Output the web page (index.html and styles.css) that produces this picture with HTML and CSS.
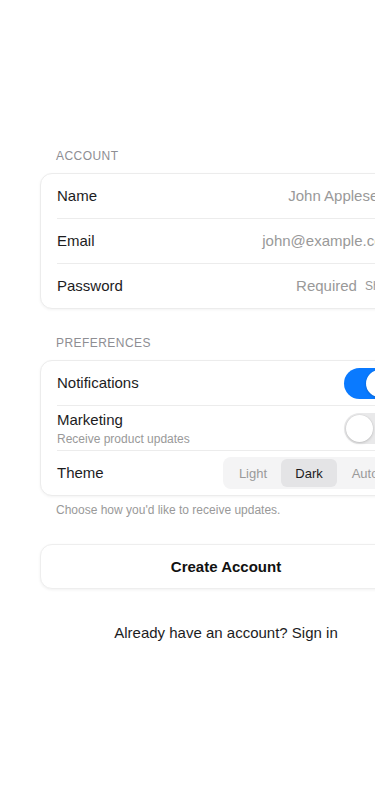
FILE: index.html
```html
<!DOCTYPE html>
<html lang="en">
<head>
<meta charset="utf-8">
<meta name="viewport" content="width=device-width, initial-scale=1">
<title>Create Account</title>
<link rel="stylesheet" href="styles.css">
</head>
<body>
<main class="page">
  <section class="section">
    <h2 class="section-label">Account</h2>
    <div class="card">
      <div class="row">
        <span class="row-title">Name</span>
        <span class="row-value">John Appleseed</span>
      </div>
      <div class="row">
        <span class="row-title">Email</span>
        <span class="row-value">john@example.com</span>
      </div>
      <div class="row">
        <span class="row-title">Password</span>
        <span class="row-right">
          <span class="row-value">Required</span>
          <span class="show">Show</span>
        </span>
      </div>
    </div>
  </section>

  <section class="section section-prefs">
    <h2 class="section-label">Preferences</h2>
    <div class="card">
      <div class="row">
        <span class="row-title">Notifications</span>
        <span class="toggle toggle-on"><span class="knob"></span></span>
      </div>
      <div class="row row-two">
        <span class="row-text">
          <span class="row-title">Marketing</span>
          <span class="row-sub">Receive product updates</span>
        </span>
        <span class="toggle"><span class="knob"></span></span>
      </div>
      <div class="row">
        <span class="row-title">Theme</span>
        <span class="segmented">
          <span class="seg">Light</span>
          <span class="seg seg-active">Dark</span>
          <span class="seg">Auto</span>
        </span>
      </div>
    </div>
    <p class="footnote">Choose how you'd like to receive updates.</p>
  </section>

  <button class="primary" type="button">Create Account</button>
  <p class="signin">Already have an account? Sign in</p>
</main>
</body>
</html>
```

FILE: styles.css
```css
html, body {
  margin: 0;
  padding: 0;
  background: #ffffff;
  overflow: hidden;
}

body {
  font-family: "Liberation Sans", Arial, sans-serif;
  color: #1c1c1e;
  -webkit-font-smoothing: antialiased;
}

.page {
  width: 372px;
  padding: 148px 0 0 40px;
  display: flex;
  flex-direction: column;
}

.section {
  display: flex;
  flex-direction: column;
}

.section-prefs {
  margin-top: 26px;
}

.section-label {
  margin: 0 0 9px 16px;
  font-size: 12px;
  line-height: 16px;
  font-weight: 400;
  text-transform: uppercase;
  letter-spacing: 0.45px;
  color: #8e8e93;
}

.card {
  background: #fff;
  border: 1px solid #ececec;
  border-radius: 12px;
  box-shadow: 0 1px 3px rgba(0, 0, 0, 0.05);
  display: flex;
  flex-direction: column;
}

.row {
  height: 44px;
  padding: 0 16px;
  display: flex;
  align-items: center;
  justify-content: space-between;
  position: relative;
}

.row + .row::before {
  content: "";
  position: absolute;
  top: -1px;
  left: 16px;
  right: 0;
  height: 1px;
  background: #ececec;
}

.row + .row {
  margin-top: 1px;
}

.row-title {
  font-size: 15px;
  line-height: 18px;
  color: #1c1c1e;
}

.row-value {
  font-size: 15px;
  line-height: 18px;
  color: #999999;
}

.row-right {
  display: flex;
  align-items: center;
  gap: 8px;
}

.show {
  font-size: 12px;
  color: #999999;
}

.row-text {
  display: flex;
  flex-direction: column;
  gap: 2px;
  padding-top: 1px;
}

.row-sub {
  font-size: 12px;
  line-height: 16px;
  color: #999999;
}

.toggle {
  width: 51px;
  height: 31px;
  border-radius: 16px;
  background: #e9e9ea;
  box-sizing: border-box;
  padding: 2px;
  display: flex;
  justify-content: flex-start;
  flex-shrink: 0;
}

.toggle-on {
  background: #0a7aff;
  justify-content: flex-end;
}

.knob {
  width: 27px;
  height: 27px;
  border-radius: 50%;
  background: #fff;
  box-shadow: 0 1px 3px rgba(0, 0, 0, 0.18), 0 0 0 0.5px rgba(0, 0, 0, 0.04);
}

.segmented {
  display: flex;
  padding: 2px;
  background: #f4f4f5;
  border-radius: 8px;
}

.seg {
  width: 56px;
  height: 28px;
  display: flex;
  align-items: center;
  justify-content: center;
  font-size: 13px;
  color: #9a9a9a;
  border-radius: 6px;
}

.seg-active {
  background: #e4e4e6;
  color: #1c1c1e;
}

.footnote {
  margin: 6px 0 0 16px;
  font-size: 12px;
  line-height: 16px;
  color: #999999;
}

.primary {
  margin-top: 26px;
  height: 45px;
  border: 1px solid #eeeeee;
  border-radius: 12px;
  background: #fff;
  box-shadow: 0 1px 3px rgba(0, 0, 0, 0.06);
  font-family: "Liberation Sans", Arial, sans-serif;
  font-size: 15px;
  font-weight: 700;
  color: #111111;
  padding: 0;
}

.signin {
  margin: 35px 0 0;
  text-align: center;
  font-size: 15px;
  line-height: 18px;
  color: #1c1c1e;
}
```
